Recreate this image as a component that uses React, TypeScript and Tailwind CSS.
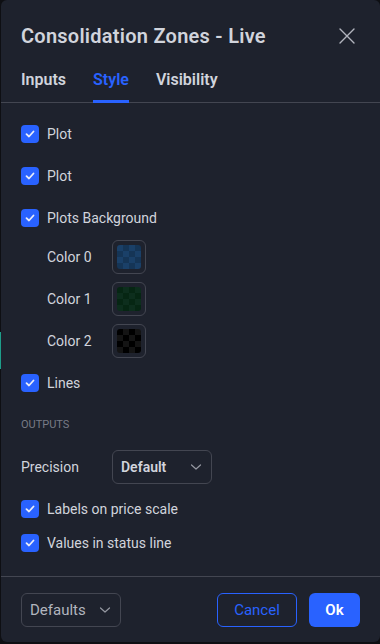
import React from "react";

const FONT = { fontFamily: "Roboto, 'Noto Sans', sans-serif" };

function Check() {
  return (
    <div className="w-[18px] h-[18px] rounded-[4px] bg-[#2962ff] flex items-center justify-center shrink-0">
      <svg width="12" height="12" viewBox="0 0 12 12" fill="none">
        <path d="M2.5 6.2 L5 8.5 L9.5 3.5" stroke="#e8ecf8" strokeWidth="1.8" strokeLinecap="round" strokeLinejoin="round" />
      </svg>
    </div>
  );
}

function CheckRow({ label, h }: { label: string; h: string }) {
  return (
    <div className={`flex items-center gap-2 ${h}`}>
      <Check />
      <span className="text-[14px] text-[#d1d4dc]">{label}</span>
    </div>
  );
}

function Swatch({ a, b }: { a: string; b: string }) {
  const cells = [];
  for (let r = 0; r < 4; r++) {
    for (let c = 0; c < 4; c++) {
      cells.push(<div key={r * 4 + c} style={{ background: (r + c) % 2 === 0 ? a : b }} />);
    }
  }
  return (
    <div className="w-[34px] h-[34px] rounded-[6px] border border-[#434651] flex items-center justify-center">
      <div className="w-[24px] h-[24px] rounded-[3px] overflow-hidden grid grid-cols-4 grid-rows-4">{cells}</div>
    </div>
  );
}

function ColorRow({ label, a, b }: { label: string; a: string; b: string }) {
  return (
    <div className="flex items-center h-[42px]">
      <span className="pl-[26px] w-[91px] text-[14px] text-[#d1d4dc]">{label}</span>
      <Swatch a={a} b={b} />
    </div>
  );
}

function Chevron() {
  return (
    <svg width="12" height="8" viewBox="0 0 12 8" fill="none">
      <path d="M1.5 2 L6 6 L10.5 2" stroke="#9598a1" strokeWidth="1.2" strokeLinecap="round" strokeLinejoin="round" />
    </svg>
  );
}

export default function App() {
  return (
    <div className="w-[380px] h-[644px] bg-[#0e0f13] flex" style={FONT}>
      <div className="w-[1px] shrink-0">
        <div className="mt-[332px] h-[37px] bg-[#1e9e8a]" />
      </div>
      <div className="w-[379px] h-[642px] bg-[#1e222d] rounded-[6px] flex flex-col">
        <div className="flex items-center justify-between pt-6 pl-5 pr-[24px]">
          <div className="text-[20px] leading-6 font-semibold text-[#d1d4dc] tracking-[0.25px]">Consolidation Zones - Live</div>
          <svg width="18" height="18" viewBox="0 0 18 18" fill="none">
            <path d="M2 2 L16 16 M16 2 L2 16" stroke="#b2b5be" strokeWidth="1.4" strokeLinecap="round" />
          </svg>
        </div>
        <div className="mt-[22px] h-[33px] border-b border-[#434651] flex pl-5 gap-[27px]">
          <div className="text-[16px] leading-5 font-semibold text-[#d1d4dc]">Inputs</div>
          <div className="relative text-[16px] leading-5 font-semibold text-[#2962ff] h-full">
            Style
            <div className="absolute left-0 right-0 bottom-[-1px] h-[3px] bg-[#2962ff]" />
          </div>
          <div className="text-[16px] leading-5 font-semibold text-[#d1d4dc]">Visibility</div>
        </div>
        <div className="flex-1 pt-[10px] px-5 flex flex-col">
          <CheckRow label="Plot" h="h-[42px]" />
          <CheckRow label="Plot" h="h-[42px]" />
          <CheckRow label="Plots Background" h="h-[39px] pt-[3px]" />
          <ColorRow label="Color 0" a="#1a4068" b="#153556" />
          <ColorRow label="Color 1" a="#062613" b="#0d2e1d" />
          <ColorRow label="Color 2" a="#000000" b="#141414" />
          <CheckRow label="Lines" h="h-[42px]" />
          <div className="h-[42px] flex items-center text-[11px] text-[#787b86] uppercase">Outputs</div>
          <div className="h-[42px] flex items-center">
            <span className="w-[91px] text-[14px] text-[#d1d4dc]">Precision</span>
            <div className="w-[100px] h-[34px] rounded-[6px] border border-[#434651] flex items-center justify-between pl-2 pr-[9px]">
              <span className="text-[14px] font-semibold text-[#d1d4dc]">Default</span>
              <Chevron />
            </div>
          </div>
          <CheckRow label="Labels on price scale" h="h-[42px]" />
          <CheckRow label="Values in status line" h="h-[26px]" />
        </div>
        <div className="border-t border-[#434651] pt-4 pb-[15px] px-5 flex items-center">
          <div className="w-[100px] h-[34px] rounded-[6px] border border-[#434651] flex items-center justify-between pl-2 pr-[9px]">
            <span className="text-[15px] text-[#b2b5be]">Defaults</span>
            <Chevron />
          </div>
          <div className="flex-1" />
          <div className="w-[80px] h-[34px] rounded-[6px] border border-[#2962ff] flex items-center justify-center text-[15px] text-[#2962ff]">Cancel</div>
          <div className="ml-3 w-[51px] h-[34px] rounded-[6px] bg-[#2962ff] flex items-center justify-center text-[15px] font-semibold text-white">Ok</div>
        </div>
      </div>
    </div>
  );
}
